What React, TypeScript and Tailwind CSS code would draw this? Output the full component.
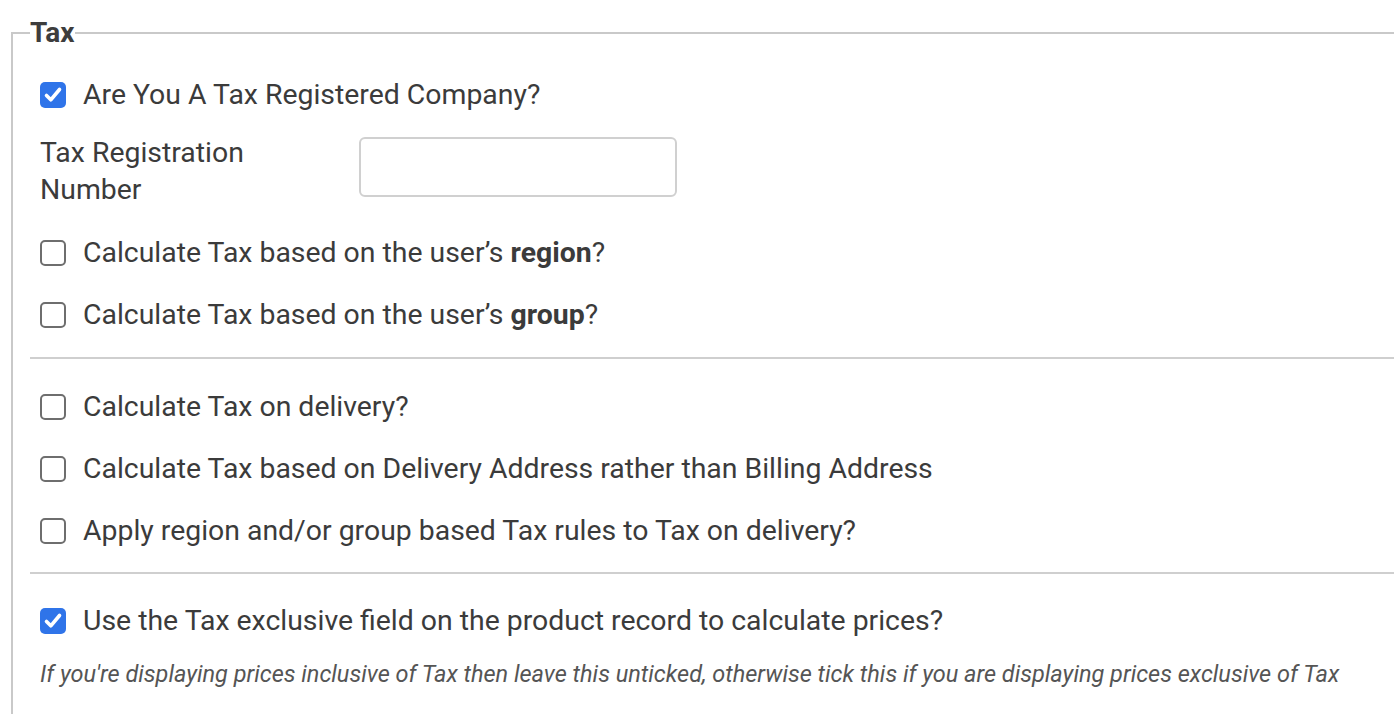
import React from "react";

const font = { fontFamily: "Roboto, 'Liberation Sans', sans-serif" };

function Box({ checked }: { checked?: boolean }) {
  if (checked) {
    return (
      <span className="flex h-[26px] w-[26px] shrink-0 items-center justify-center rounded-[5px] bg-[#2f74e9]">
        <svg width="26" height="26" viewBox="0 0 26 26" fill="none">
          <path d="M6.5 13.5l4.3 4.3L19.5 7.5" stroke="#fff" strokeWidth="3.6" strokeLinecap="round" strokeLinejoin="round" />
        </svg>
      </span>
    );
  }
  return <span className="block h-[26px] w-[26px] shrink-0 rounded-[5px] border-2 border-[#6e6e6e] bg-white" />;
}

function Row({ checked, className = "", children }: { checked?: boolean; className?: string; children: React.ReactNode }) {
  return (
    <label className={`flex h-[37px] items-center gap-[17px] px-[10px] ${className}`}>
      <Box checked={checked} />
      <span>{children}</span>
    </label>
  );
}

export default function App() {
  return (
    <div className="h-[714px] overflow-hidden bg-white text-[28.4px] leading-[37px] text-[#3b3b3b]" style={font}>
      <fieldset className="ml-[11px] mt-[19px] w-[1420px] border-2 border-[#c9c9c9] pl-[17px]">
        <legend className="text-[28px] font-bold leading-[28px] text-[#3d3d3d]">Tax</legend>

        <Row checked className="mt-[29px]">Are You A Tax Registered Company?</Row>

        <div className="mt-[21px] flex items-start px-[10px]">
          <div className="w-[319px] leading-[37px]">
            Tax Registration
            <br />
            Number
          </div>
          <input
            type="text"
            className="mt-[3px] h-[60px] w-[318px] rounded-[6px] border-2 border-[#d0d0d0] bg-white px-3 outline-none"
          />
        </div>

        <Row className="mt-[26px]">
          Calculate Tax based on the user’s <b className="font-bold">region</b>?
        </Row>
        <Row className="mt-[25px]">
          Calculate Tax based on the user’s <b className="font-bold">group</b>?
        </Row>

        <hr className="mt-[24px] border-t-2 border-[#cfcfcf]" />

        <Row className="mt-[29px]">Calculate Tax on delivery?</Row>
        <Row className="mt-[25px]">Calculate Tax based on Delivery Address rather than Billing Address</Row>
        <Row className="mt-[25px]">Apply region and/or group based Tax rules to Tax on delivery?</Row>

        <hr className="mt-[23px] border-t-2 border-[#cfcfcf]" />

        <Row checked className="mt-[28px]">Use the Tax exclusive field on the product record to calculate prices?</Row>

        <p className="mt-[20px] px-[10px] text-[23.5px] italic leading-[30px] text-[#555]">
          If you're displaying prices inclusive of Tax then leave this unticked, otherwise tick this if you are displaying prices exclusive of Tax
        </p>
        <div className="h-[40px]" />
      </fieldset>
    </div>
  );
}
